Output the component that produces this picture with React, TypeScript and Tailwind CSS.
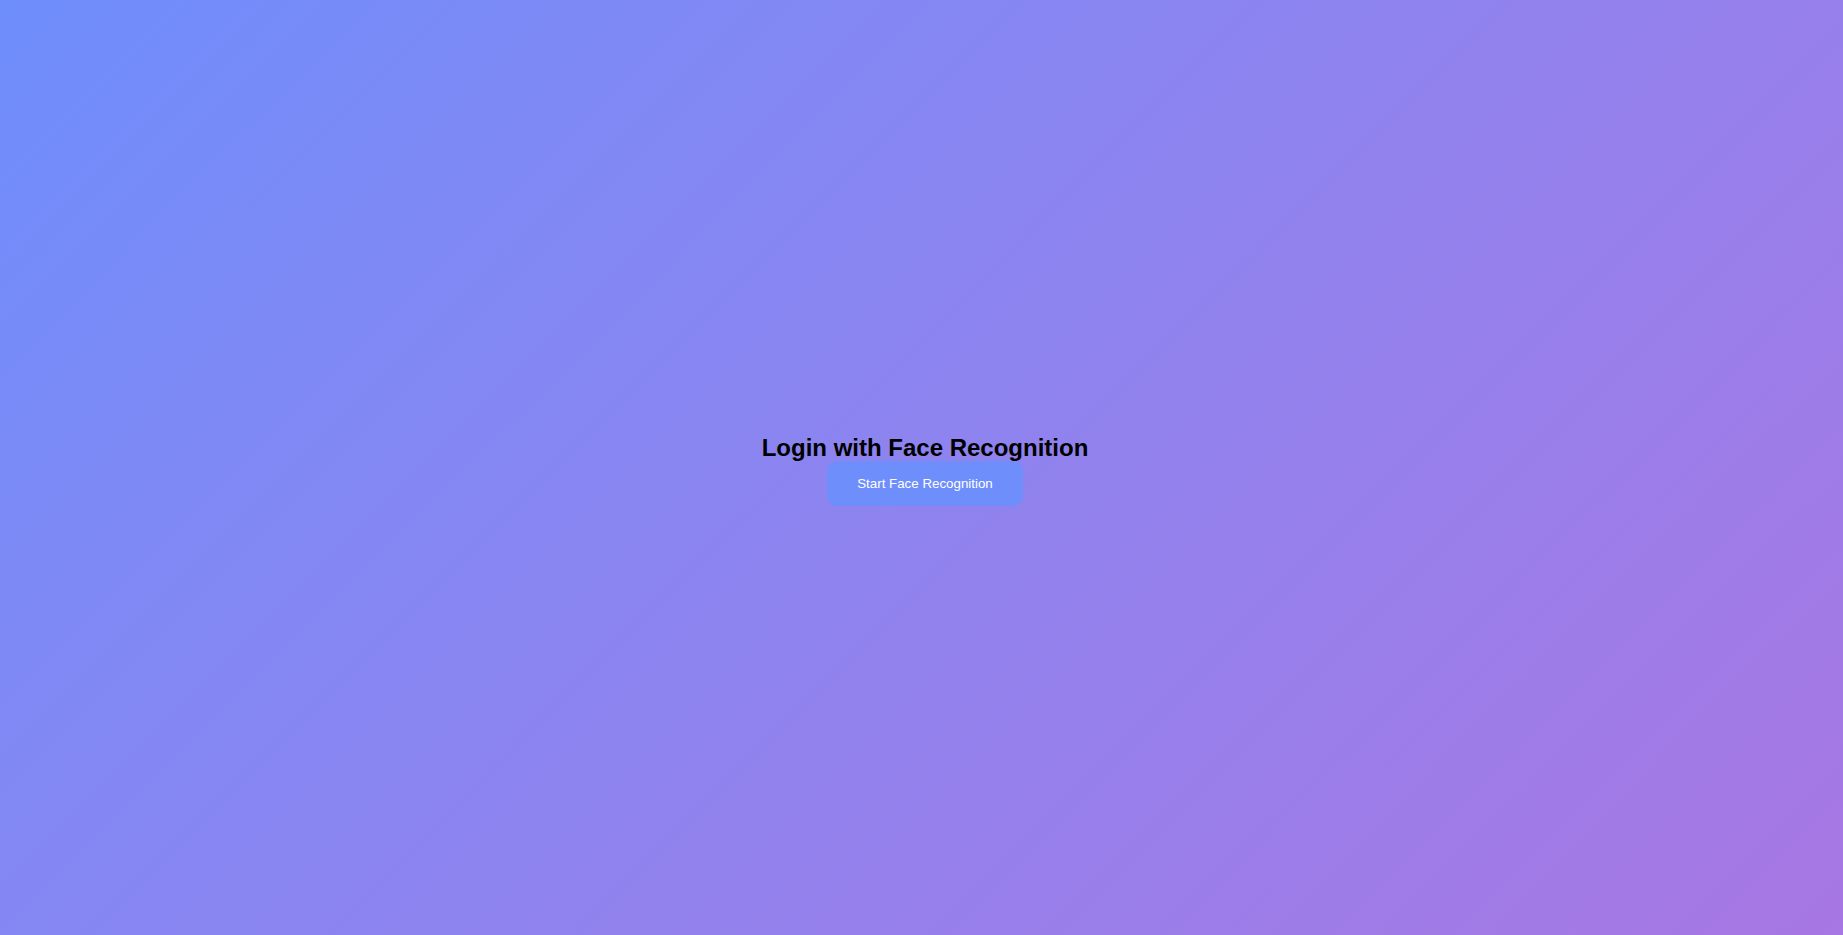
export default function App() {
  return (
    <div
      className="flex h-screen w-full flex-col items-center justify-center bg-linear-135 from-[#6e8efb] to-[#a777e3] pt-[5px] pl-[7px]"
      style={{ fontFamily: '"Liberation Sans", Arial, sans-serif' }}
    >
      <h1 className="m-0 text-[24px] leading-[27.6px] font-bold text-black">
        Login with Face Recognition
      </h1>
      <button className="cursor-pointer rounded-[10px] bg-[#6e8efb] px-[30px] py-[15px] text-[13.33px] leading-[15px] text-white">
        Start Face Recognition
      </button>
    </div>
  );
}
